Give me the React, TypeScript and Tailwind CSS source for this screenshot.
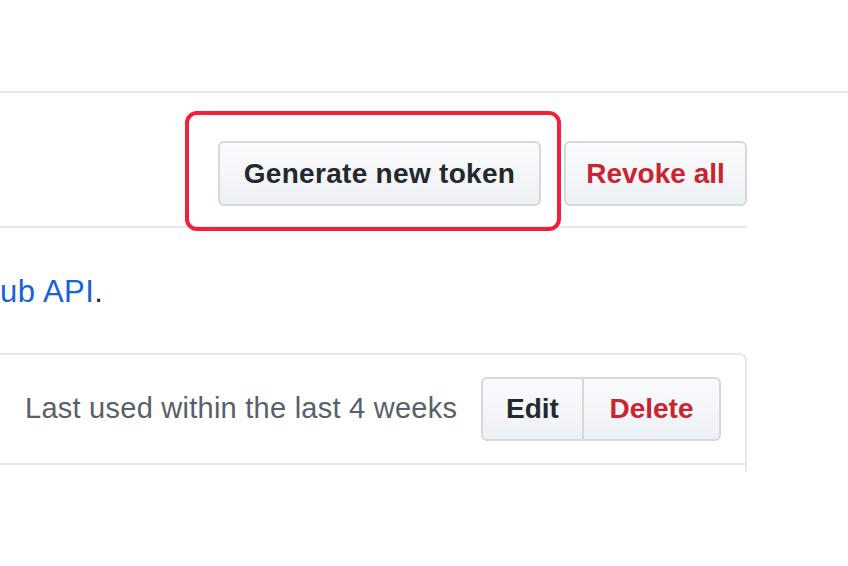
import React from "react";

const btn =
  "h-[65px] rounded-[6px] border-2 border-[#d5d8dc] bg-gradient-to-b from-[#fafbfc] to-[#eef1f4] text-[28px] font-bold leading-none flex items-center justify-center";

export default function App() {
  return (
    <div className="w-[848px] h-[566px] bg-white overflow-hidden font-['Liberation_Sans',Arial,sans-serif]">
      <div className="mt-[91px] border-t-2 border-[#e6e8eb]">
        <div className="w-[747px]">
          <div className="flex justify-end gap-[23px] pt-[48px] pb-[20px] border-b-2 border-[#e6e8eb]">
            <div className="relative">
              <button className={btn + " w-[323px] tracking-[0.3px] text-[#24292e]"}>Generate new token</button>
              <div className="absolute left-[-33px] top-[-30px] right-[-20px] bottom-[-25px] border-[4px] border-[#f41f3b] rounded-[12px] pointer-events-none" />
            </div>
            <button className={btn + " w-[183px] text-[#cb2431]"}>Revoke all</button>
          </div>

          <p className="mt-[44px] text-[31px] leading-[40px] tracking-[0.5px] text-[#24292e]">
            <span className="text-[#1a62d8]">ub API</span>.
          </p>

          <div className="mt-[41px] border-t-2 border-r-2 border-[#e6e8eb] rounded-tr-[8px]">
            <div className="flex items-center justify-end pl-[25px] pr-[24px] pt-[22px] pb-[22px] border-b-2 border-[#e6e8eb]">
              <span className="flex-1 text-[29px] tracking-[0.25px] text-[#586069]">
                Last used within the last 4 weeks
              </span>
              <div className="flex h-[64px] rounded-[6px] border-2 border-[#d5d8dc] bg-gradient-to-b from-[#fafbfc] to-[#eef1f4] overflow-hidden">
                <button className="w-[101px] text-[28px] font-bold text-[#24292e] border-r-2 border-[#d5d8dc]">
                  Edit
                </button>
                <button className="w-[135px] text-[28px] font-bold text-[#cb2431]">
                  Delete
                </button>
              </div>
            </div>
            <div className="h-[7px]" />
          </div>
        </div>
      </div>
    </div>
  );
}
